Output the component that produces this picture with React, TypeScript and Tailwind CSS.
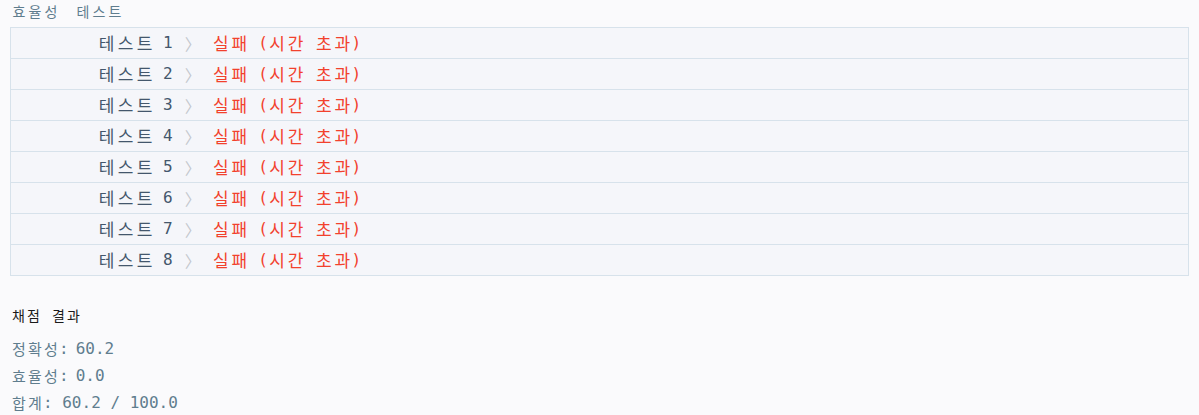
const tests = [1, 2, 3, 4, 5, 6, 7, 8];

const KO = { fontFamily: '"Noto Sans CJK KR", sans-serif' };

// Hangul in the reference is set in a monospaced face: each syllable takes a fixed cell.
function Ko({ text, cell }: { text: string; cell: string }) {
  return (
    <span className="inline-flex" style={KO}>
      {text.split('').map((ch, i) => (
        <span key={i} className={`inline-block text-center ${cell}`}>
          {ch}
        </span>
      ))}
    </span>
  );
}

function TestRow({ n }: { n: number }) {
  return (
    <div className="flex h-[31px] items-center border-t border-[#d7e2eb] pl-[86px] text-[16px] leading-[20px] first:h-[30px] first:border-t-0">
      <span className="flex items-center text-[#44576c]">
        <Ko text="테스트" cell="w-[19px] text-[17px]" />
        <span className="ml-[9px]">{n}</span>
      </span>
      <span className="ml-[12px] inline-block w-[19px] text-[16px] text-[#c3c7cd]" style={KO}>
        〉
      </span>
      <span className="ml-[8px] flex items-center text-[#f2412d]">
        <Ko text="실패" cell="w-[18.5px] text-[17px]" />
        <span className="ml-[9.6px]">(</span>
        <Ko text="시간" cell="w-[18.5px] text-[17px]" />
        <span className="ml-[9.6px]" />
        <Ko text="초과" cell="w-[18.5px] text-[17px]" />
        <span>)</span>
      </span>
    </div>
  );
}

export default function App() {
  return (
    <div
      className="min-h-[415px] bg-[#fafafc] pt-px"
      style={{ fontFamily: '"DejaVu Sans Mono", "Noto Sans CJK KR", monospace' }}
    >
      <div className="flex pl-[11px] text-[14px] leading-[20px] text-[#5f7d8e]">
        <Ko text="효율성" cell="w-[16px]" />
        <span className="ml-[16px]">
          <Ko text="테스트" cell="w-[16px]" />
        </span>
      </div>

      <div className="mx-[10px] mt-[5px] border border-[#d7e2eb] bg-[#f5f6fa]">
        {tests.map((n) => (
          <TestRow key={n} n={n} />
        ))}
      </div>

      <div className="mt-[29px] flex pl-[11px] text-[14px] leading-[20px] text-[#1a1a1a]">
        <Ko text="채점" cell="w-[15px]" />
        <span className="ml-[10px]">
          <Ko text="결과" cell="w-[15px]" />
        </span>
      </div>

      <div className="mt-[13px] space-y-[7px] pl-[11px] text-[16px] leading-[20px] text-[#5f7d8e]">
        <div className="flex items-center">
          <Ko text="정확성" cell="w-[16px] text-[15px]" />
          <span>:</span>
          <span className="ml-[7px]">60.2</span>
        </div>
        <div className="flex items-center">
          <Ko text="효율성" cell="w-[16px] text-[15px]" />
          <span>:</span>
          <span className="ml-[7px]">0.0</span>
        </div>
        <div className="flex items-center">
          <Ko text="합계" cell="w-[16px] text-[15px]" />
          <span>:</span>
          <span className="ml-[9.6px] whitespace-pre">60.2 / 100.0</span>
        </div>
      </div>
    </div>
  );
}
